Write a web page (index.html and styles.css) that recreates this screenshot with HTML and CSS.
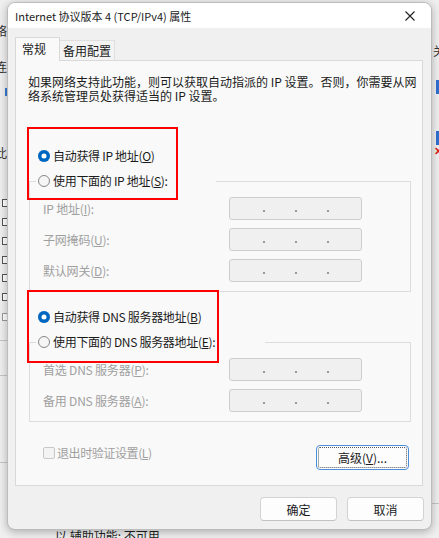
FILE: index.html
```html
<!DOCTYPE html>
<html>

<head>
    <meta charset="utf-8">
    <title>Internet 协议版本 4 (TCP/IPv4) 属性</title>
    <link rel="stylesheet" href="styles.css">
</head>

<body>
    <!--Vinduer bak dialogen-->
    <div class="behind">
        <span class="bg-char bg-c1">络</span>
        <span class="bg-char bg-c2">连</span>
        <span class="bg-char bg-c3">此</span>
        <span class="bg-tick"></span>
        <span class="bg-box" style="top: 199px"></span>
        <span class="bg-box" style="top: 218px"></span>
        <span class="bg-box" style="top: 237px"></span>
        <span class="bg-box" style="top: 256px"></span>
        <span class="bg-box" style="top: 274px"></span>
        <span class="bg-box" style="top: 293px"></span>
        <span class="bg-box empty" style="top: 313px"></span>
        <span class="bg-line" style="top: 340px"></span>
        <span class="bg-line" style="top: 375px"></span>
        <span class="bg-line" style="top: 462px"></span>
        <span class="bg-char bg-c4">关</span>
        <span class="bg-icon" style="top: 80px"></span>
        <span class="bg-icon" style="top: 131px"></span>
        <span class="bg-x">✕</span>
        <span class="bg-line right" style="top: 503px"></span>
        <span class="bg-status">以 辅助功能: 不可用</span>
    </div>

    <!--Dialog-->
    <div class="dialog">
        <div class="titlebar">
            <span class="title">Internet 协议版本 4 (TCP/IPv4) 属性</span>
            <span class="close">
                <svg width="10" height="10" viewBox="0 0 10 10">
                    <path d="M0.5 0.5 L9.5 9.5 M9.5 0.5 L0.5 9.5" stroke="#1f1f1f" stroke-width="1.1" fill="none"/>
                </svg>
            </span>
        </div>

        <div class="dialog-body">
            <div class="tabs">
                <div class="tab active">常规</div>
                <div class="tab">备用配置</div>
            </div>

            <div class="panel">
                <p class="intro">如果网络支持此功能，则可以获取自动指派的 IP 设置。否则，你需要从网<br>络系统管理员处获得适当的 IP 设置。</p>

                <!--IP adresse-->
                <label class="radio-row first"><span class="radio checked"></span><span>自动获得 IP 地址(<u>O</u>)</span></label>
                <fieldset class="group">
                    <legend class="ip-legend">
                        <label class="radio-row"><span class="radio"></span><span>使用下面的 IP 地址(<u>S</u>):</span></label>
                    </legend>
                    <div class="fields">
                        <span class="field-label">IP 地址(<u>I</u>):</span>
                        <div class="ip-box"><span class="seg"></span><span class="dot"></span><span class="seg"></span><span class="dot"></span><span class="seg"></span><span class="dot"></span><span class="seg"></span></div>
                        <span class="field-label">子网掩码(<u>U</u>):</span>
                        <div class="ip-box"><span class="seg"></span><span class="dot"></span><span class="seg"></span><span class="dot"></span><span class="seg"></span><span class="dot"></span><span class="seg"></span></div>
                        <span class="field-label">默认网关(<u>D</u>):</span>
                        <div class="ip-box"><span class="seg"></span><span class="dot"></span><span class="seg"></span><span class="dot"></span><span class="seg"></span><span class="dot"></span><span class="seg"></span></div>
                    </div>
                </fieldset>

                <!--DNS-->
                <label class="radio-row second"><span class="radio checked"></span><span>自动获得 DNS 服务器地址(<u>B</u>)</span></label>
                <fieldset class="group">
                    <legend class="dns-legend">
                        <label class="radio-row"><span class="radio"></span><span>使用下面的 DNS 服务器地址(<u>E</u>):</span></label>
                    </legend>
                    <div class="fields">
                        <span class="field-label">首选 DNS 服务器(<u>P</u>):</span>
                        <div class="ip-box"><span class="seg"></span><span class="dot"></span><span class="seg"></span><span class="dot"></span><span class="seg"></span><span class="dot"></span><span class="seg"></span></div>
                        <span class="field-label">备用 DNS 服务器(<u>A</u>):</span>
                        <div class="ip-box"><span class="seg"></span><span class="dot"></span><span class="seg"></span><span class="dot"></span><span class="seg"></span><span class="dot"></span><span class="seg"></span></div>
                    </div>
                </fieldset>

                <div class="panel-footer">
                    <label class="check-row"><span class="checkbox"></span><span>退出时验证设置(<u>L</u>)</span></label>
                    <button class="btn focused">高级(<u>V</u>)...</button>
                </div>

                <!--Røde markeringer-->
                <div class="mark mark-ip"></div>
                <div class="mark mark-dns"></div>
            </div>

            <div class="dialog-buttons">
                <button class="btn">确定</button>
                <button class="btn">取消</button>
            </div>
        </div>
    </div>
</body>

</html>
```

FILE: styles.css
```css
  * {
      box-sizing: border-box;
  }

  body {
      margin: 0;
      width: 439px;
      height: 538px;
      overflow: hidden;
      position: relative;
      background-color: #efefef;
      color: #1b1b1b;
      font-family: "Noto Sans CJK SC", sans-serif;
      font-size: 12px;
  }

  /* Biter av vinduene bak */
  .behind {
      position: absolute;
      inset: 0;
  }

  .bg-char {
      position: absolute;
      font-size: 12px;
      line-height: 14px;
      color: #333;
  }

  .bg-c1 { left: -5px; top: 24px; }
  .bg-c2 { left: -5px; top: 60px; }
  .bg-c3 { left: -5px; top: 146px; }
  .bg-c4 { left: 433px; top: 44px; }

  .bg-tick {
      position: absolute;
      left: 5px;
      top: 88px;
      width: 2px;
      height: 8px;
      background-color: #3a7bd5;
  }

  .bg-box {
      position: absolute;
      left: 2px;
      width: 6px;
      height: 8px;
      border: 1px solid #555;
      background-color: #fff;
  }

  .bg-box.empty {
      border-color: #999;
  }

  .bg-line {
      position: absolute;
      left: 0;
      width: 8px;
      height: 1px;
      background-color: #c4c4c4;
  }

  .bg-line.right {
      left: 432px;
  }

  .bg-icon {
      position: absolute;
      left: 436px;
      width: 4px;
      height: 14px;
      background-color: #2f6fcf;
  }

  .bg-x {
      position: absolute;
      left: 434px;
      top: 142px;
      color: #d81e1e;
      font-size: 11px;
      font-weight: bold;
  }

  .bg-status {
      position: absolute;
      left: 55px;
      top: 527px;
      font-size: 12px;
      color: #222;
  }

  /* Selve dialogen */
  .dialog {
      position: relative;
      z-index: 1;
      margin: 2px 0 0 7px;
      width: 425px;
      height: 528px;
      border: 1px solid #bcbcbc;
      border-radius: 8px;
      background-color: #f0f0f0;
      box-shadow: 0 2px 9px rgba(0, 0, 0, 0.28);
      overflow: hidden;
  }

  .titlebar {
      display: flex;
      align-items: center;
      height: 25px;
      padding-left: 7px;
      background-color: #fff;
  }

  .title {
      font-size: 11px;
      color: #1a1a1a;
  }

  .close {
      display: flex;
      margin-left: auto;
      margin-right: 16px;
  }

  .dialog-body {
      padding: 9px 7px 0 7px;
  }

  /* Faner */
  .tabs {
      display: flex;
      align-items: flex-end;
      height: 23px;
  }

  .tab {
      height: 20px;
      padding: 0 3px 0 3px;
      line-height: 19px;
      border: 1px solid #dfdfdf;
      border-bottom: none;
      border-left: none;
      background-color: #f3f3f3;
      white-space: nowrap;
  }

  .tab.active {
      position: relative;
      z-index: 1;
      width: 45px;
      height: 24px;
      margin-bottom: -1px;
      padding-left: 6px;
      line-height: 22px;
      border: 1px solid #d9d9d9;
      border-bottom: none;
      background-color: #f9f9f9;
  }

  .panel {
      position: relative;
      height: 426px;
      margin-right: 1px;
      padding: 14px 13px 0 12px;
      border: 1px solid #d9d9d9;
      background-color: #f9f9f9;
  }

  .intro {
      margin: 0;
      line-height: 14px;
      white-space: nowrap;
  }

  /* Radioknapper */
  .radio-row {
      display: flex;
      align-items: center;
      gap: 3px;
      height: 16px;
      line-height: 16px;
      white-space: nowrap;
      letter-spacing: -0.3px;
  }

  .radio-row.first {
      margin: 45px 0 0 10px;
  }

  .radio-row.second {
      margin: 17px 0 0 10px;
  }

  .radio {
      width: 12px;
      height: 12px;
      border-radius: 50%;
      border: 1px solid #878787;
      background-color: #f5f5f5;
      flex-shrink: 0;
  }

  .radio.checked {
      border: none;
      background-color: #0067c0;
      box-shadow: inset 0 0 0 3.5px #0067c0, inset 0 0 0 6px #fff;
  }

  /* Grupper */
  .group {
      width: 382px;
      margin: 9px 0 0 1px;
      padding: 8px 0 9px 6px;
      border: 1px solid #dcdcdc;
      min-width: 0;
  }

  .group legend {
      padding: 0 0 0 2px;
  }

  .ip-legend {
      width: 180px;
  }

  .dns-legend {
      width: 229px;
  }

  .fields {
      display: grid;
      grid-template-columns: 186px 133px;
      row-gap: 8px;
      align-items: center;
      margin-left: 7px;
  }

  .field-label {
      color: #a0a0a0;
      white-space: nowrap;
      letter-spacing: -0.2px;
  }

  .ip-box {
      display: flex;
      align-items: center;
      height: 23px;
      padding: 0 3px 0 4px;
      border: 1px solid #cdcdcd;
      border-radius: 3px;
      background-color: #f0f0f0;
  }

  .seg {
      width: 28px;
  }

  .dot {
      display: flex;
      justify-content: center;
      width: 4px;
      height: 2px;
      margin-top: 4px;
  }

  .dot::before {
      content: "";
      width: 2px;
      height: 2px;
      border-radius: 50%;
      background-color: #7c7c7c;
  }

  /* Bunnen av fanen */
  .panel-footer {
      display: flex;
      justify-content: space-between;
      align-items: flex-start;
      margin-top: 23px;
      padding-left: 15px;
  }

  .check-row {
      display: flex;
      align-items: center;
      gap: 2px;
      height: 12px;
      margin-top: 2px;
      line-height: 12px;
      color: #a0a0a0;
      white-space: nowrap;
      letter-spacing: -0.4px;
  }

  .checkbox {
      width: 12px;
      height: 12px;
      border: 1px solid #c8c8c8;
      border-radius: 2px;
      background-color: #f3f3f3;
  }

  /* Knapper */
  .btn {
      width: 77px;
      height: 24px;
      padding: 0;
      border: 1px solid #d3d3d3;
      border-bottom-color: #c2c2c2;
      border-radius: 4px;
      background-color: #fdfdfd;
      color: #1b1b1b;
      font-family: "Noto Sans CJK SC", sans-serif;
      font-size: 12px;
  }

  .btn.focused {
      position: relative;
      width: 93px;
      height: 25px;
      border: 1px solid #4a8fdb;
  }

  .btn.focused::after {
      content: "";
      position: absolute;
      inset: 1px;
      border: 1px dotted #555;
      border-radius: 2px;
  }

  .dialog-buttons {
      display: flex;
      justify-content: flex-end;
      gap: 10px;
      margin-top: 11px;
  }

  /* Røde rammer oppå innholdet */
  .mark {
      position: absolute;
      left: 11px;
      height: 73px;
      border: 2px solid #f00;
  }

  .mark-ip {
      top: 66px;
      width: 151px;
  }

  .mark-dns {
      top: 229px;
      width: 192px;
  }
```
